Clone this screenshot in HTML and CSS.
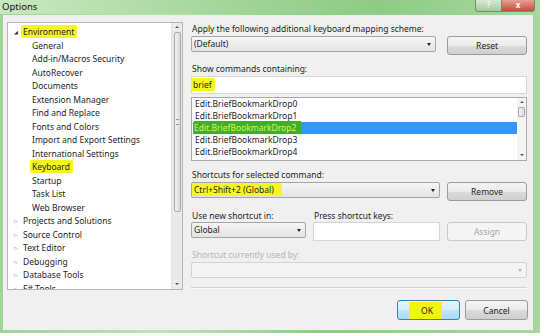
FILE: index.html
```html
<!DOCTYPE html>
<html lang="en">

<head>
	<meta charset="UTF-8">
	<meta name="viewport" content="width=device-width, initial-scale=1.0">
	<title>Options</title>

	<link rel="stylesheet" href="styles.css">
</head>

<body>
	<div class="window">
		<div class="titlebar">
			<span class="title">Options</span>
			<div class="caption-btns">
				<span class="cap-help">?</span>
				<span class="cap-close">x</span>
			</div>
		</div>

		<div class="client">
			<!-- 왼쪽 트리 -->
			<div class="tree">
				<ul class="tree-list">
					<li class="node open"><span class="arrow">&#9698;</span><span class="mark">Environment</span></li>
					<li class="leaf">General</li>
					<li class="leaf">Add-in/Macros Security</li>
					<li class="leaf">AutoRecover</li>
					<li class="leaf">Documents</li>
					<li class="leaf">Extension Manager</li>
					<li class="leaf">Find and Replace</li>
					<li class="leaf">Fonts and Colors</li>
					<li class="leaf">Import and Export Settings</li>
					<li class="leaf">International Settings</li>
					<li class="leaf"><span class="mark">Keyboard</span></li>
					<li class="leaf">Startup</li>
					<li class="leaf">Task List</li>
					<li class="leaf">Web Browser</li>
					<li class="node"><span class="arrow">&#9655;</span>Projects and Solutions</li>
					<li class="node"><span class="arrow">&#9655;</span>Source Control</li>
					<li class="node"><span class="arrow">&#9655;</span>Text Editor</li>
					<li class="node"><span class="arrow">&#9655;</span>Debugging</li>
					<li class="node"><span class="arrow">&#9655;</span>Database Tools</li>
					<li class="node last"><span class="arrow">&#9655;</span>F# Tools</li>
				</ul>
				<div class="vscroll">
					<span class="sc-up"></span>
					<span class="sc-thumb tree-thumb"><i></i></span>
					<span class="sc-down"></span>
				</div>
			</div>

			<!-- 오른쪽 설정 -->
			<div class="settings">
				<div class="label first">Apply the following additional keyboard mapping scheme:</div>
				<div class="row">
					<div class="combo combo-scheme">(Default)<span class="drop"></span></div>
					<button class="btn">Reset</button>
				</div>

				<div class="label">Show commands containing:</div>
				<div class="textbox"><span class="mark">brief</span></div>

				<div class="listbox">
					<ul class="items">
						<li>Edit.BriefBookmarkDrop0</li>
						<li>Edit.BriefBookmarkDrop1</li>
						<li class="selected"><span class="mark-sel">Edit.BriefBookmarkDrop2</span></li>
						<li>Edit.BriefBookmarkDrop3</li>
						<li>Edit.BriefBookmarkDrop4</li>
					</ul>
					<div class="vscroll small">
						<span class="sc-up"></span>
						<span class="sc-thumb list-thumb"></span>
						<span class="sc-down"></span>
					</div>
				</div>

				<div class="label">Shortcuts for selected command:</div>
				<div class="row">
					<div class="combo combo-shortcut"><span class="mark">Ctrl+Shift+2 (Global)</span><span class="drop"></span></div>
					<button class="btn">Remove</button>
				</div>

				<div class="label-row">
					<div class="label scope-label">Use new shortcut in:</div>
					<div class="label">Press shortcut keys:</div>
				</div>
				<div class="row">
					<div class="combo combo-scope">Global<span class="drop"></span></div>
					<div class="textbox keys"></div>
					<button class="btn" disabled>Assign</button>
				</div>

				<div class="label disabled-text">Shortcut currently used by:</div>
				<div class="combo combo-used"><span class="drop"></span></div>

				<div class="separator"></div>

				<div class="footer">
					<button class="btn btn-ok"><span class="mark-ok">OK</span></button>
					<button class="btn btn-cancel">Cancel</button>
				</div>
			</div>
		</div>
	</div>
</body>

</html>
```

FILE: styles.css
```css
		body {
			margin: 0;
			font-family: "Noto Sans", "Open Sans", sans-serif;
			font-size: 8.5px;
			color: #1e1e1e;
		}

		.window {
			width: 540px;
			height: 333px;
			display: flex;
			flex-direction: column;
			background: linear-gradient(90deg, #9fd39a 0%, #bde3b4 30%, #8dcb86 60%, #a6d79d 100%);
			box-sizing: border-box;
		}

		/* 제목 표시줄 */
		.titlebar {
			height: 14px;
			display: flex;
			justify-content: space-between;
			align-items: flex-start;
			background: linear-gradient(90deg, #c9e8c1 0%, #a5d69c 40%, #8ecb85 70%, #a9d8a0 100%);
		}

		.title {
			font-size: 9.5px;
			line-height: 14px;
			padding-left: 2px;
			color: #111;
		}

		.caption-btns {
			display: flex;
			margin-right: 5px;
		}

		.caption-btns span {
			display: block;
			height: 11px;
			line-height: 10px;
			text-align: center;
			font-size: 8px;
			color: #fff;
			border: 1px solid #6f8f70;
			border-top: none;
		}

		.cap-help {
			width: 25px;
			background: linear-gradient(180deg, #d6ead2, #a6c9a0);
			border-radius: 0 0 0 3px;
		}

		.cap-close {
			width: 32px;
			background: linear-gradient(180deg, #e8a093, #c44c3a);
			border-left: none !important;
			border-radius: 0 0 3px 0;
			font-weight: bold;
		}

		.client {
			flex: 1;
			margin: 1px 7px 3px 3px;
			background: #f0f0f0;
			border-top: 1px solid #e6f3e3;
			display: flex;
			align-items: flex-start;
		}

		/* 트리 */
		.tree {
			width: 176px;
			height: 268px;
			margin: 6px 0 0 4px;
			background: #fff;
			border: 1px solid #b5b5b5;
			box-sizing: border-box;
			display: flex;
			overflow: hidden;
		}

		.tree-list {
			flex: 1;
			list-style: none;
			margin: 0;
			padding: 2px 0 0;
		}

		.tree-list li {
			height: 13.5px;
			line-height: 13.5px;
			white-space: nowrap;
		}

		.tree-list .last {
			height: 8px;
			overflow: hidden;
		}

		.tree-list .node {
			padding-left: 6px;
		}

		.tree-list .leaf {
			padding-left: 24px;
		}

		.arrow {
			display: inline-block;
			width: 9px;
			font-size: 5px;
			color: #8a8a8a;
			vertical-align: 1px;
		}

		.open .arrow {
			color: #333;
		}

		.mark {
			background: #f6f71e;
			padding: 1px 3px 1px 2px;
			margin-left: -2px;
			border-radius: 2px;
		}

		.vscroll {
			width: 10px;
			background: #eaeaea;
			border-left: 1px solid #e2e2e2;
			display: flex;
			flex-direction: column;
			align-items: center;
		}

		.sc-up,
		.sc-down {
			height: 9px;
			width: 10px;
			position: relative;
		}

		.sc-up::after,
		.sc-down::after {
			content: "";
			position: absolute;
			left: 3px;
			top: 3px;
			border-left: 2px solid transparent;
			border-right: 2px solid transparent;
		}

		.sc-up::after {
			border-bottom: 2px solid #555;
		}

		.sc-down::after {
			border-top: 2px solid #555;
		}

		.sc-thumb {
			width: 7px;
			box-sizing: border-box;
			border: 1px solid #a9a9a9;
			border-radius: 2px;
			background: linear-gradient(90deg, #f3f3f3, #dadada);
			display: flex;
			align-items: center;
			justify-content: center;
		}

		.tree-thumb {
			height: 180px;
			margin-bottom: auto;
		}

		.tree-thumb i {
			width: 3px;
			height: 4px;
			border-top: 1px solid #999;
			border-bottom: 1px solid #999;
		}

		.sc-down {
			margin-top: auto;
		}

		/* 오른쪽 */
		.settings {
			width: 336px;
			margin: 6px 0 0 8px;
			display: flex;
			flex-direction: column;
		}

		.label {
			height: 12px;
			line-height: 12px;
			margin-top: 8px;
			margin-bottom: 1px;
			padding-left: 1px;
			white-space: nowrap;
		}

		.label.first {
			margin-top: 1px;
		}

		.label-row {
			display: flex;
			margin-top: 9px;
		}

		.label-row .label {
			margin: 0;
		}

		.scope-label {
			width: 121px;
		}

		.row {
			display: flex;
			align-items: flex-start;
			gap: 7px;
		}

		.combo {
			height: 16px;
			line-height: 14px;
			box-sizing: border-box;
			border: 1px solid #a5a5a5;
			border-radius: 2px;
			background: linear-gradient(180deg, #f6f6f6, #e3e3e3);
			padding-left: 2px;
			position: relative;
			white-space: nowrap;
		}

		.drop {
			position: absolute;
			right: 4px;
			top: 6px;
			border-left: 2.5px solid transparent;
			border-right: 2.5px solid transparent;
			border-top: 3px solid #222;
		}

		.combo-scheme {
			width: 246px;
			margin-right: 4px;
		}

		.combo-shortcut {
			width: 250px;
		}

		.combo-shortcut .mark {
			padding: 1px 8px 1px 2px;
		}

		.combo-scope {
			width: 115px;
		}

		.combo-used {
			width: 336px;
			border-color: #d2d2d2;
			background: #f4f4f4;
		}

		.combo-used .drop {
			border-top-color: #b5b5b5;
		}

		.btn {
			width: 80px;
			height: 19px;
			margin: 0 0 0 auto;
			padding: 0;
			font: inherit;
			color: #1e1e1e;
			border: 1px solid #9c9c9c;
			border-radius: 3px;
			background: linear-gradient(180deg, #f4f4f4 0%, #ebebeb 50%, #dcdcdc 51%, #cfcfcf 100%);
		}

		.btn:disabled {
			color: #a6a6a6;
			border-color: #c9c9c9;
			background: #f4f4f4;
		}

		.textbox {
			height: 18px;
			line-height: 16px;
			box-sizing: border-box;
			border: 1px solid #d6d6d6;
			background: #fff;
			padding-left: 1px;
			margin-bottom: 3px;
		}

		.textbox.keys {
			width: 127px;
			height: 19px;
			margin: 0;
		}

		.listbox {
			height: 64px;
			box-sizing: border-box;
			border: 1px solid #a9a9a9;
			background: #fff;
			display: flex;
		}

		.items {
			flex: 1;
			list-style: none;
			margin: 0;
			padding: 0 0 0 1px;
		}

		.items li {
			height: 12px;
			line-height: 12px;
			padding-left: 2px;
			white-space: nowrap;
		}

		.items .selected {
			background: #3399ff;
			color: #fff;
		}

		.mark-sel {
			background: #3fae2a;
			color: #d5f560;
			padding: 1px 5px 1px 0;
			margin-left: -1px;
		}

		.vscroll.small {
			width: 9px;
			border-left: none;
			background: #f4f4f4;
		}

		.list-thumb {
			height: 10px;
			margin-bottom: auto;
		}

		.disabled-text {
			color: #b5b5b5;
			margin-bottom: 1px;
		}

		.separator {
			height: 1px;
			background: #d3d3d3;
			margin-top: 9px;
			border-bottom: 1px solid #fafafa;
		}

		.footer {
			display: flex;
			justify-content: flex-end;
			gap: 5px;
			margin-top: 11px;
			margin-right: -1px;
		}

		.footer .btn {
			margin: 0;
			width: 63px;
			height: 20px;
		}

		.btn-ok {
			border-color: #3c7fb1 !important;
			background: linear-gradient(180deg, #e8f4fc 0%, #d6ecfa 50%, #bee6fd 51%, #a7d9f5 100%) !important;
		}

		.mark-ok {
			background: #f2f512;
			padding: 3px 9px 3px 12px;
			margin-left: -6px;
		}
```
